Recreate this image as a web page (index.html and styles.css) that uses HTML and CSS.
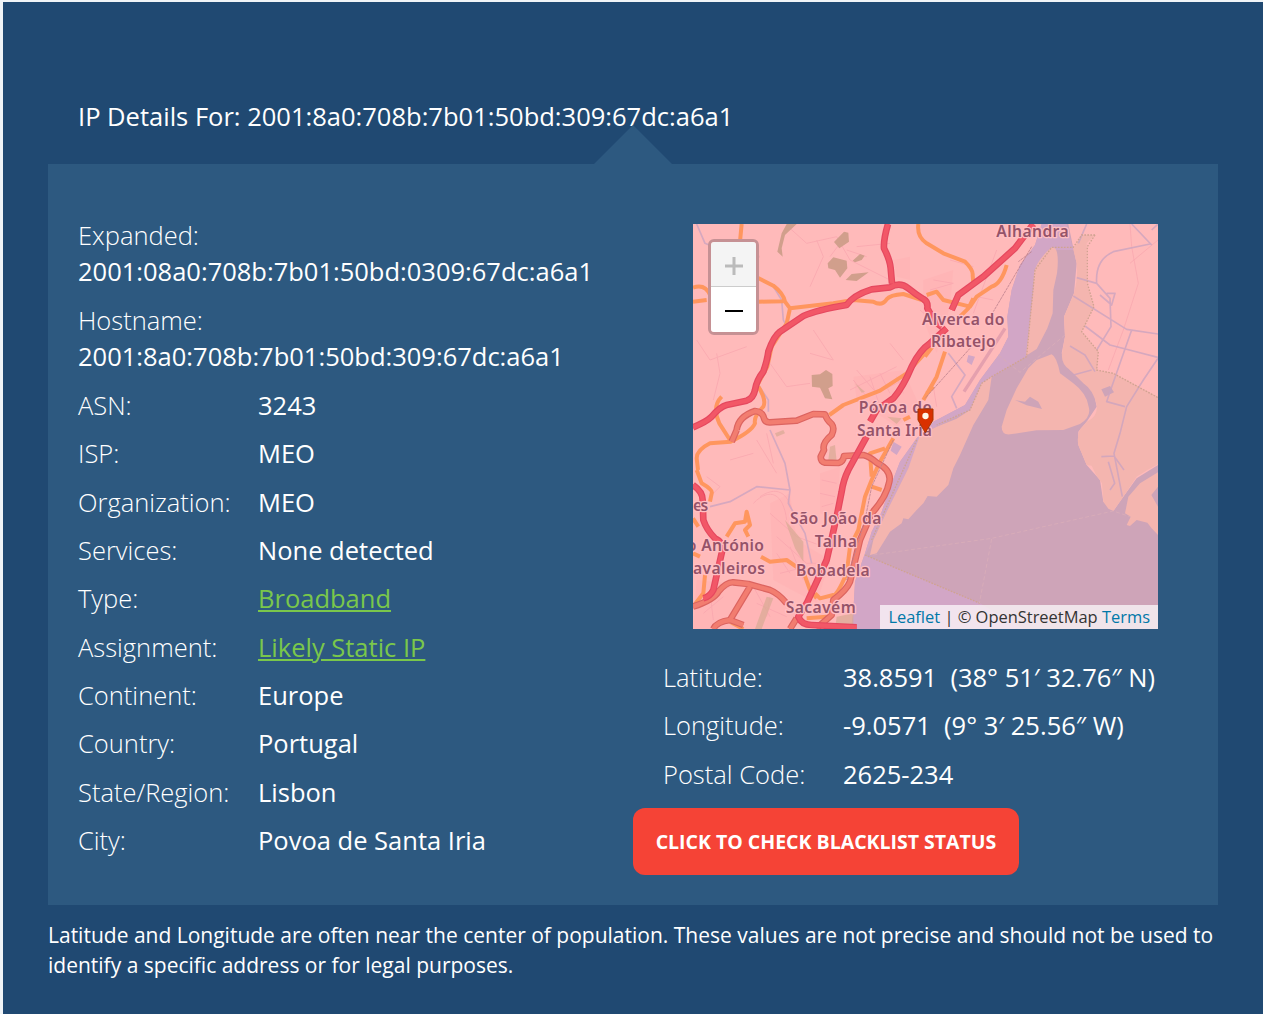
FILE: index.html
```html
<!DOCTYPE html>
<html lang="en">
<head>
<meta charset="utf-8">
<title>IP Details</title>
<link rel="stylesheet" href="styles.css">
</head>
<body>
<main class="page">
  <h1 class="title">IP Details For: 2001:8a0:708b:7b01:50bd:309:67dc:a6a1</h1>
  <section class="panel">
    <div class="col details">
      <div class="row stacked"><span class="label">Expanded:</span><span class="value">2001:08a0:708b:7b01:50bd:0309:67dc:a6a1</span></div>
      <div class="row stacked"><span class="label">Hostname:</span><span class="value">2001:8a0:708b:7b01:50bd:309:67dc:a6a1</span></div>
      <div class="row"><span class="label">ASN:</span><span class="value">3243</span></div>
      <div class="row"><span class="label">ISP:</span><span class="value">MEO</span></div>
      <div class="row"><span class="label">Organization:</span><span class="value">MEO</span></div>
      <div class="row"><span class="label">Services:</span><span class="value">None detected</span></div>
      <div class="row"><span class="label">Type:</span><a class="value link" href="#">Broadband</a></div>
      <div class="row"><span class="label">Assignment:</span><a class="value link" href="#">Likely Static IP</a></div>
      <div class="row"><span class="label">Continent:</span><span class="value">Europe</span></div>
      <div class="row"><span class="label">Country:</span><span class="value">Portugal</span></div>
      <div class="row"><span class="label">State/Region:</span><span class="value">Lisbon</span></div>
      <div class="row"><span class="label">City:</span><span class="value">Povoa de Santa Iria</span></div>
    </div>
    <div class="col location">
      <div class="map">
        <svg class="tiles" viewBox="9 12 1395 1215" width="465" height="405">
          <defs>
            <path id="trunk" d="M140 630Q145 590 195 573Q218 575 222 595Q225 608 240 607L320 602L370 582L405 583Q410 600 425 612Q435 625 425 645Q395 670 402 690L392 710Q392 725 405 728L445 729Q460 725 462 708L520 705Q540 710 560 728Q605 750 598 785Q590 830 545 880L510 960L480 1085Q470 1110 430 1140L425 1185L380 1225M140 630L125 665M9 1160Q70 1140 85 1115Q110 1085 130 1087L175 1092L240 1110Q265 1120 290 1150M180 1100L120 1200Q80 1205 70 1227M120 1200L160 1215M320 1195L300 1227"/>
            <path id="motorway" d="M594 12Q580 60 582 85Q600 120 602 145L606 190M9 622Q50 605 65 590Q90 560 110 555L170 542Q190 535 195 510Q200 480 220 455Q232 420 235 395Q250 350 270 335L340 288Q380 270 470 255Q490 225 545 208L600 202Q630 185 655 205Q680 225 700 237Q715 245 712 265Q735 310 755 320M1030 12L975 85L880 170L805 225L785 270M770 325L720 370Q690 390 665 440Q640 500 610 535L560 570L540 605M530 650L475 750Q460 780 455 815L440 890L410 1020L350 1150L325 1190Q335 1215 365 1215L500 1222M9 795Q38 815 38 840L40 900Q50 930 75 955Q105 970 95 1000L70 1110Q60 1130 40 1135"/>
          </defs>
          <rect x="9" y="12" width="1395" height="1215" fill="#ffbaba"/>
          <!-- built-up areas -->
          <g fill="#ffafb1" opacity=".4">
            <path d="M490 470L640 450L690 560L620 620L500 540ZM390 760L450 740L440 900L390 880ZM610 120L660 110L660 180L620 170ZM240 850L300 820L320 960L420 1020L380 1150L250 1080ZM20 1080L120 1090L260 1120L330 1180L300 1227H9Z"/>
            <path d="M700 180L790 150L780 260L740 400L700 300Z"/>
          </g>
          <!-- minor roads -->
          <g class="minor">
            <path d="M300 25L350 70L440 50L480 120L600 180M380 60L400 110L360 200M180 80L210 110L170 140M20 360L60 420L170 380M80 400L90 460L70 540M370 330L430 420L360 400M240 430L290 500L360 490M500 450L560 520L640 480M480 510L620 440M540 470L570 560M600 370L640 420M200 660L260 760M230 640L250 730M120 720L190 700M210 830C270 790 300 830 310 890M190 850C240 800 280 820 290 900M240 880L320 950L400 980M260 950L350 1030L420 1030M30 1140L120 1100M190 1100L240 1190M60 830L90 800L50 770M450 70L420 110M600 70L500 80M470 90L530 110M730 180L790 190L720 210M780 120L850 140M860 230L910 240M730 500L740 560M690 270L760 330"/>
            <path d="M490 480L530 530M570 460L600 520M620 470L640 520M395 780L440 790M390 820L435 830M395 860L430 850M260 1000L300 1060M300 980L340 1080M270 1060L350 1040M40 1180L100 1130M70 1200L60 1120M200 1150L290 1190M240 1130L230 1190"/>
            <path d="M1320 12L1325 80L1345 190L1300 330L1255 450M1404 60L1320 130M920 90L850 280"/>
          </g>
          <!-- estuary -->
          <path fill="#cea4b8" d="M1055 12L1035 75L990 135L965 210L952 290L955 350L930 400L870 480L825 555L730 605L680 655L630 725L605 790L575 875L545 935L525 1000L495 1085L490 1175L483 1227H1404V735L1340 775L1300 830L1270 873L1240 845L1230 780L1190 735L1165 675L1165 635L1190 605L1220 560L1210 510L1140 450L1115 400L1125 350L1122 290L1152 220L1160 130L1150 85L1135 12Z"/>
          <path fill="#d2a6c6" d="M1055 12L1035 75L990 135L965 210L952 290L955 350L930 400L870 480L825 555L730 605L680 655L630 725L605 790L575 875L545 935L525 1000L495 1085L490 1175L483 1227H1000L870 1150L525 1005L655 745L700 640L840 570L875 490L1008 410L1020 300L1035 150L1085 90H1150L1130 12Z"/>
          <!-- marshland -->
          <g fill="#f4b5af">
            <path d="M1150 88L1175 45H1215L1190 70V190L1212 260L1175 335L1225 395L1220 450L1270 460L1404 530V733Q1370 750 1340 770L1300 830L1270 873L1255 866L1240 845L1236 790L1218 765L1205 737L1190 735L1165 675Q1160 650 1170 628L1190 605Q1225 590 1220 555Q1210 510 1180 490L1140 450Q1110 430 1117 395L1125 350L1122 290L1152 220Q1165 170 1160 130Z"/>
            <path d="M1085 82Q1040 120 1032 160L1030 210L1020 300L1008 407L1040 387L1072 325L1088 280L1090 210L1101 160Q1108 100 1095 85Z"/>
            <path d="M1085 403L1040 420L1015 445L980 505L950 570L935 620Q935 645 960 643L1040 631L1120 630L1170 612Q1205 590 1196 560Q1190 520 1150 490L1110 460Q1100 410 1085 403Z"/>
            <path d="M905 470L875 490L840 570L800 596L740 620L690 645L655 745L590 875L550 960L540 1005L560 1000L600 935L635 910L640 895L655 898L680 870L700 850L713 828L740 830L775 795L790 745L810 705L850 615L895 540Z"/>
            <path d="M1404 757L1350 790L1315 830L1305 880L1322 890L1310 915L1320 918L1340 900L1372 908L1385 925L1404 945Z"/>
          </g>
          <path fill="#cea4b8" d="M975 540L1005 545L1020 530L1045 545L1056 567L1010 556ZM1234 508L1260 498L1272 517L1245 530ZM1404 800L1384 825L1404 860Z"/>
          <path fill="#d2a6c6" d="M835 405L855 410L845 435L830 425ZM610 665L635 680L620 705L602 692Z"/>
          <g fill="none" stroke="#cca4c0" stroke-width="5" stroke-linejoin="round" opacity=".8">
            <path d="M1160 173L1220 190L1260 235L1263 320L1220 390M1220 190Q1215 120 1270 95L1380 72M1230 225L1265 255L1275 220L1250 220M1150 228L1310 328L1404 342M1185 318L1260 375L1404 412M1325 330L1260 515L1250 545L1305 560M1140 378L1185 405L1215 455M1404 415L1360 480L1310 560L1290 640L1272 700L1297 830M1234 710L1272 708L1302 750M1255 725L1264 755L1274 790L1260 810"/>
            <path d="M1190 12L1165 70M1325 12L1385 75M1404 12L1385 30M1205 450L1150 465"/>
            <path d="M20 12L45 70L70 80M250 200L275 240L280 300L295 330M205 495L235 540L235 575M240 630L285 730L300 810L295 850L345 940L365 1030M60 860L120 845L200 800L300 810M775 400L825 465L785 530L800 565"/>
          </g>
          <!-- boundaries -->
          <g fill="none" stroke="#d0a391" stroke-width="4" stroke-dasharray="5 4">
            <path d="M1215 45H1175L1150 82H1085L1035 150L1020 300L1010 410L905 470L875 490L840 570L740 615"/>
            <path d="M1215 45L1192 80V190L1212 260L1175 335L1225 395L1220 450L1270 460L1404 533M525 1005L870 1150M680 660L545 960"/>
          </g>
          <path fill="none" stroke="#d8acb8" stroke-width="3" stroke-dasharray="12 7" d="M550 1005L905 955L1270 873L1320 890M905 957L868 1150M925 405L990 457L1125 345"/>
          <!-- woodland -->
          <path fill="#d19f8c" d="M290 12H320L285 45L275 85L278 110L262 95L275 40ZM432 66L462 35L475 38L477 65L448 85ZM413 130L430 112L470 122L472 145L450 173L435 150L415 145ZM488 122L510 102L524 107L515 120L495 127ZM467 180L485 162L536 157L500 183ZM365 465L390 463L408 450L427 462L428 498L415 505L427 538L405 535L390 503L366 500Z"/>
          <path fill="#d9aa94" opacity=".7" d="M420 680L435 675L440 725L415 720ZM285 900L340 965L340 1025L315 985ZM250 1135L215 1227H195L230 1130ZM440 1190L490 1180V1227H435ZM495 490L525 515L515 518ZM255 640L280 630L285 640L260 650ZM592 590L635 595L620 612Z"/>
          <g class="roads">
            <!-- secondary roads -->
            <g class="road">
              <path d="M155 12L150 65M9 203Q45 190 60 225M9 245L50 240M200 172L250 197Q280 220 285 245L300 265L430 250L490 240L550 245Q575 260 590 238Q600 225 640 222L710 245M205 245L280 244M300 265L290 310L245 380L232 440L205 490M205 500Q230 540 220 560Q190 590 195 610Q185 635 122 665L60 670Q20 690 20 715L24 750M95 530Q65 560 88 610L120 660M418 585L460 555L570 512L650 460L750 350"/>
              <path d="M685 12Q680 50 710 70L760 100L825 125Q850 150 848 165L850 190M950 135Q935 190 905 200L860 230L840 260L760 240L740 215L710 225M850 235L835 265L810 290M765 395L740 470L700 540M710 520L730 500M705 410L765 330M640 600L660 590"/>
              <path d="M610 655L570 725L545 780L525 830L505 930L480 980L470 1060Q440 1130 430 1125L390 1135L375 1120M545 800L575 810M545 770L540 700L585 685M20 750L35 790Q70 810 65 820L60 845M110 950L135 910L165 905L170 875L180 915L165 930L175 950M213 1010L240 1025L290 1020L340 1055L360 1110L380 1135M45 1065L40 1120L9 1160M9 895L25 920"/>
              <path d="M350 1195L410 1190M120 1205L160 1227M9 1000L30 1010"/>
            </g>
            <!-- trunk roads and motorways, each a casing with a lighter core -->
            <use class="trunk case" href="#trunk"/>
            <use class="trunk" href="#trunk"/>
            <use class="motorway case" href="#motorway"/>
            <use class="motorway" href="#motorway"/>
          </g>
          <!-- railway and runway -->
          <path fill="none" stroke="#bd818d" stroke-width="3" stroke-dasharray="9 2" opacity=".8" d="M1025 80L910 275M840 385L705 535M610 660L545 800L525 900L470 1080M1025 95L985 125"/>
          <path fill="none" stroke="#e5a0ae" stroke-width="10" d="M945 325L822 515"/>
          <g class="places">
            <text x="919" y="52" textLength="217">Alhandra</text>
            <text x="696" y="314" textLength="247">Alverca do</text>
            <text x="723" y="382" textLength="194">Ribatejo</text>
            <text x="506" y="579" textLength="219">Póvoa de</text>
            <text x="501" y="647" textLength="225">Santa Iria</text>
            <text x="9" y="872" textLength="46">es</text>
            <text x="300" y="913" textLength="274">São João da</text>
            <text x="374" y="981" textLength="127">Talha</text>
            <text x="-10" y="992" textLength="232">o António</text>
            <text x="9" y="1061" textLength="216">avaleiros</text>
            <text x="318" y="1067" textLength="221">Bobadela</text>
            <text x="287" y="1178" textLength="210">Sacavém</text>
          </g>
          <path d="M684 567H729V600L712 628L706 638L700 628L684 600Z" fill="#d93000" stroke="#a63500" stroke-width="3" stroke-linejoin="round"/>
          <circle cx="706.5" cy="588" r="9.5" fill="#fff4ea"/>
        </svg>
        <div class="zoom">
          <button class="zoom-btn off" aria-label="Zoom in"><svg width="20" height="20" viewBox="0 0 20 20"><path d="M1 10H19M10 1V19" stroke="#bbb" stroke-width="3" /></svg></button>
          <button class="zoom-btn" aria-label="Zoom out"><svg width="20" height="20" viewBox="0 0 20 20"><path d="M1 10H19" stroke="#000" stroke-width="2"/></svg></button>
        </div>
        <div class="attribution"><a href="#">Leaflet</a> | © OpenStreetMap <a href="#">Terms</a></div>
      </div>
      <div class="row"><span class="label">Latitude:</span><span class="value">38.8591&nbsp; (38° 51′ 32.76″ N)</span></div>
      <div class="row"><span class="label">Longitude:</span><span class="value">-9.0571&nbsp; (9° 3′ 25.56″ W)</span></div>
      <div class="row"><span class="label">Postal Code:</span><span class="value">2625-234</span></div>
      <button class="check">CLICK TO CHECK BLACKLIST STATUS</button>
    </div>
  </section>
  <p class="note">Latitude and Longitude are often near the center of population. These values are not precise and should not be used to identify a specific address or for legal purposes.</p>
</main>
</body>
</html>
```
FILE: styles.css
```css
* { box-sizing: border-box; }
body {
  margin: 0;
  padding: 2px 0 0 3px;
  background: #f0f4f7;
  font-family: "Open Sans", sans-serif;
  color: #fff;
}
.page {
  height: 1012px;
  padding: 96px 45px 0;
  background: #204972;
  overflow: hidden;
}
.title {
  margin: 0 0 30px;
  padding-left: 30px;
  font-size: 25.53px;
  line-height: 36px;
  font-weight: 400;
}
.panel {
  position: relative;
  display: flex;
  width: 1170px;
  height: 741px;
  padding-top: 53px;
  background: #2d5980;
}
.panel::before {
  content: "";
  position: absolute;
  left: 546px;
  top: -39px;
  border: solid transparent;
  border-width: 0 39px 39px;
  border-bottom-color: #2d5980;
}
.col { width: 585px; }
.row {
  display: flex;
  padding: 0 30px;
  height: 48.375px;
  font-size: 25.5px;
  line-height: 36px;
  white-space: nowrap;
}
.stacked { display: block; height: 84.9px; }
.label { width: 180px; flex: none; font-weight: 300; }
.stacked .label, .stacked .value { display: block; }
.link { color: #7ac74b; text-decoration: underline; }
.map {
  position: relative;
  width: 465px;
  height: 405px;
  margin: 7px 0 30px 60px;
  overflow: hidden;
}
.tiles { display: block; }
.minor { fill: none; stroke: #f8a5ae; stroke-width: 3; stroke-linejoin: round; opacity: .7; }
.roads { fill: none; stroke-linejoin: round; filter: blur(1.2px); }
.road { stroke: #ff965e; stroke-width: 12; }
.trunk { stroke: #f27d70; stroke-width: 13; }
.trunk.case { stroke: #dc6460; stroke-width: 20; }
.motorway { stroke: #f25767; stroke-width: 13; }
.motorway.case { stroke: #e5485f; stroke-width: 20; }
.places {
  font: 600 47px "Noto Sans", sans-serif;
  fill: #955369;
  stroke: #ffbfc3;
  stroke-width: 8;
  stroke-linejoin: round;
  paint-order: stroke;
}
.zoom {
  position: absolute;
  left: 15px;
  top: 15px;
  width: 51px;
  height: 96px;
  border: 3px solid #c69194;
  border-radius: 6px;
  overflow: hidden;
}
.zoom-btn {
  display: flex;
  align-items: center;
  justify-content: center;
  width: 45px;
  height: 45px;
  padding: 2px 0 0;
  border: 0;
  background: #fff;
}
.zoom-btn.off { padding-top: 3px; background: #f4f4f4; border-bottom: 1px solid #ccc; }
.attribution {
  position: absolute;
  right: 0;
  bottom: 0;
  height: 24px;
  padding: 0 8px;
  background: rgba(255, 255, 255, .7);
  color: #333;
  font-size: 16.45px;
  line-height: 24px;
  white-space: nowrap;
}
.attribution a { color: #0078a8; text-decoration: none; }
.check {
  display: block;
  width: 386px;
  height: 67px;
  margin-top: 4px;
  padding: 0;
  border: 0;
  border-radius: 12px;
  background: #f54336;
  color: #fff;
  font: 700 19.5px "Open Sans", sans-serif;
}
.note {
  margin: 15px 0 0;
  font-size: 21px;
  line-height: 30px;
}
```
